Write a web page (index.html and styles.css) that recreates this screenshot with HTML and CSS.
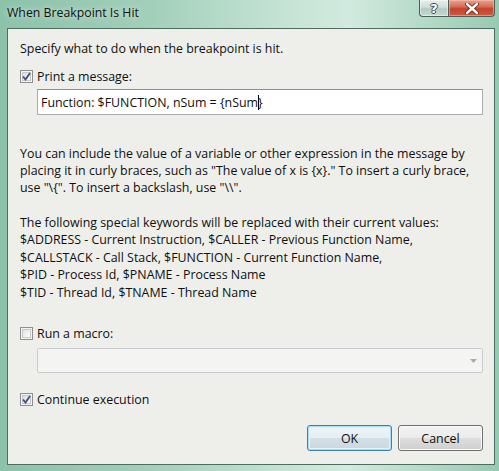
FILE: index.html
```html
<!DOCTYPE html>
<html>
<head>
<meta charset="utf-8">
<link rel="stylesheet" href="styles.css">
</head>
<body>
<div class="window">
  <div class="titlebar">
    <span class="title">When Breakpoint Is Hit</span>
    <div class="caption-btns">
      <div class="cbtn help"><span class="qmark">?</span></div>
      <div class="cbtn close">
        <svg width="14" height="11" viewBox="0 0 14 11">
          <path d="M2 1 L12 10 M12 1 L2 10" stroke="#5a1d12" stroke-width="4" stroke-linecap="round"/>
          <path d="M2 1 L12 10 M12 1 L2 10" stroke="#ffffff" stroke-width="2.4" stroke-linecap="round"/>
        </svg>
      </div>
    </div>
  </div>
  <div class="client">
    <p class="line intro">Specify what to do when the breakpoint is hit.</p>
    <div class="check row-print">
      <span class="box checked">
        <svg width="9" height="9" viewBox="0 0 9 9"><path d="M1 4.5 L3.5 7.5 L8 1" fill="none" stroke="#3d4f7e" stroke-width="1.8"/></svg>
      </span>
      <span class="check-label">Print a message:</span>
    </div>
    <div class="textbox">Function: $FUNCTION, nSum = {nSum<span class="caret"></span>}</div>
    <p class="para p1">You can include the value of a variable or other expression in the message by<br>placing it in curly braces, such as "The value of x is {x}." To insert a curly brace,<br>use "\{". To insert a backslash, use "\\".</p>
    <p class="para p2">The following special keywords will be replaced with their current values:<br>$ADDRESS - Current Instruction, $CALLER - Previous Function Name,<br>$CALLSTACK - Call Stack, $FUNCTION - Current Function Name,<br>$PID - Process Id, $PNAME - Process Name<br>$TID - Thread Id, $TNAME - Thread Name</p>
    <div class="check row-macro">
      <span class="box"></span>
      <span class="check-label">Run a macro:</span>
    </div>
    <div class="combo">
      <svg class="arrow" width="7" height="4" viewBox="0 0 7 4"><path d="M0 0 L7 0 L3.5 4 Z" fill="#a9abae"/></svg>
    </div>
    <div class="check row-continue">
      <span class="box checked">
        <svg width="9" height="9" viewBox="0 0 9 9"><path d="M1 4.5 L3.5 7.5 L8 1" fill="none" stroke="#3d4f7e" stroke-width="1.8"/></svg>
      </span>
      <span class="check-label">Continue execution</span>
    </div>
    <div class="buttons">
      <div class="btn default">OK</div>
      <div class="btn">Cancel</div>
    </div>
  </div>
</div>
</body>
</html>
```

FILE: styles.css
```css
html, body {
  margin: 0;
  padding: 0;
}
body {
  width: 499px;
  height: 471px;
  overflow: hidden;
  font-family: "Open Sans", "Noto Sans", sans-serif;
  font-size: 12.4px;
  color: #0f0f0f;
}
.window {
  width: 499px;
  height: 471px;
  display: flex;
  flex-direction: column;
  background:
    linear-gradient(90deg, #8cc2aa 0%, #a2cfba 30%, #c6e4d6 58%, #d2eadf 70%, #b3d9c7 86%, #98c9b3 100%);
}
.titlebar {
  height: 28px;
  flex: none;
  display: flex;
  justify-content: space-between;
  align-items: flex-start;
}
.title {
  margin-left: 7px;
  margin-top: 4px;
  font-size: 12.3px;
  line-height: 17px;
  color: #111;
  text-shadow: 0 0 6px rgba(255,255,255,0.8);
}
.caption-btns {
  display: flex;
  margin-right: 4px;
  height: 18px;
}
.cbtn {
  height: 17px;
  box-sizing: border-box;
  border: 1px solid #4b5f58;
  border-top: none;
  display: flex;
  align-items: center;
  justify-content: center;
}
.help {
  width: 29px;
  border-right: none;
  border-radius: 0 0 0 4px;
  background: linear-gradient(180deg, #e6efeb 0%, #cfdfd8 45%, #b4cbc1 55%, #c5dad1 100%);
  box-shadow: inset 0 0 0 1px rgba(255,255,255,0.45);
}
.qmark {
  font-family: "DejaVu Sans", sans-serif;
  font-weight: bold;
  font-size: 13px;
  line-height: 13px;
  color: #ffffff;
  text-shadow: -1px 0 #3e4a55, 1px 0 #3e4a55, 0 -1px #3e4a55, 0 1px #3e4a55;
}
.close {
  width: 47px;
  border-radius: 0 0 4px 0;
  background: linear-gradient(180deg, #e4a391 0%, #d7705c 40%, #c4432c 55%, #cf5a41 100%);
  box-shadow: inset 0 0 0 1px rgba(255,200,180,0.5);
}
.client {
  margin-left: 7px;
  width: 488px;
  height: 437px;
  box-sizing: border-box;
  border: 1px solid #4e6c61;
  background: #eeefeb;
  padding: 11px 11px 0 12px;
  display: flex;
  flex-direction: column;
}
p {
  margin: 0;
}
.line, .para, .check {
  line-height: 17px;
  white-space: nowrap;
}
.check {
  display: flex;
  align-items: center;
  height: 17px;
}
.row-print { margin-top: 11px; }
.row-macro { margin-top: 24px; }
.row-continue { margin-top: 18px; }
.box {
  width: 13px;
  height: 13px;
  box-sizing: border-box;
  border: 1px solid #8e8f8f;
  background: linear-gradient(135deg, #d8d8d8 0%, #f4f4f4 60%, #ffffff 100%);
  box-shadow: inset 0 0 0 1px #f4f4f4, inset 0 0 0 2px #c8c8c8;
  display: flex;
  align-items: center;
  justify-content: center;
  margin-right: 4px;
  flex: none;
}
.box.checked {
  background: linear-gradient(135deg, #cdd3e0 0%, #eef0f5 60%, #ffffff 100%);
}
.textbox {
  margin-top: 4px;
  margin-left: 17px;
  width: 446px;
  height: 26px;
  box-sizing: border-box;
  border: 1px solid #abadb3;
  border-top-color: #8a8f98;
  background: #ffffff;
  padding-left: 3px;
  display: flex;
  align-items: center;
  white-space: pre;
}
.caret {
  display: inline-block;
  width: 1px;
  height: 15px;
  background: #000;
  margin-right: -1px;
}
.p1 { margin-top: 30px; }
.p2 {
  margin-top: 18px;
  line-height: 17.4px;
}
.combo {
  margin-top: 6px;
  margin-left: 17px;
  width: 446px;
  height: 25px;
  box-sizing: border-box;
  border: 1px solid #c9cbce;
  border-radius: 2px;
  background: #f4f4f2;
  display: flex;
  align-items: center;
  justify-content: flex-end;
  padding-right: 5px;
}
.buttons {
  margin-top: 17px;
  display: flex;
  justify-content: flex-end;
  gap: 6px;
}
.btn {
  width: 85px;
  height: 26px;
  box-sizing: border-box;
  border: 1px solid #707070;
  border-radius: 3px;
  background: linear-gradient(180deg, #f3f3f3 0%, #ebebeb 48%, #dddddd 52%, #cfcfcf 100%);
  box-shadow: inset 0 0 0 1px #fbfbfb;
  display: flex;
  align-items: center;
  justify-content: center;
}
.btn.default {
  border-color: #3c7fb1;
  box-shadow: inset 0 0 0 1px #a9dcf5, inset 0 0 0 2px #e2f3fb;
  background: linear-gradient(180deg, #eef5f8 0%, #e5eef2 48%, #d3dfe5 52%, #c9d8df 100%);
}
```
